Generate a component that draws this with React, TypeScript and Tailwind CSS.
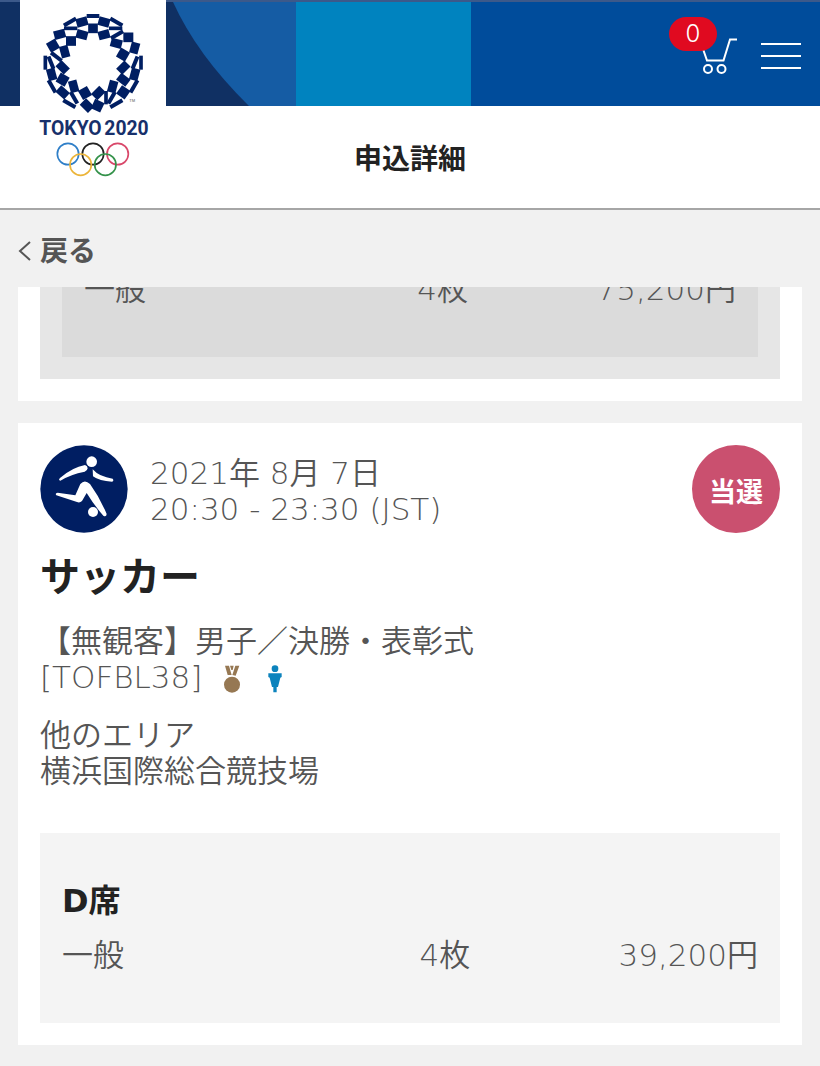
// [cx, cy, width, height, rotation]
const emblem: [number, number, number, number, number][] = [
  [189, 33, 38, 12, 0], [189, 70, 29, 29, 0], [156, 51, 34, 26, -15], [222, 51, 34, 26, 15],
  [120, 51, 42, 12, -30], [259, 51, 42, 12, 30], [122, 70, 40, 11, 0], [257, 70, 40, 11, 0],
  [156, 89, 34, 26, 15], [222, 89, 34, 26, -15], [89, 88, 34, 26, -15], [123, 108, 30, 29, 0],
  [69, 122, 31, 31, -30], [104, 140, 26, 36, -15], [261, 89, 42, 12, -30], [295, 97, 30, 29, 0],
  [259, 115, 34, 26, 15], [314, 129, 26, 34, 15], [279, 149, 31, 31, 30], [46, 173, 11, 42, 0],
  [63, 173, 12, 40, -22], [79, 155, 40, 12, 38], [98, 187, 35, 26, 45], [65, 208, 26, 36, -15],
  [98, 224, 31, 31, 30], [66, 244, 12, 42, -30], [98, 262, 35, 26, 42], [131, 244, 26, 36, -15],
  [132, 278, 12, 40, -30], [118, 296, 42, 12, 30], [165, 264, 31, 31, -30],
  [171, 302, 35, 27, 45], [205, 264, 35, 27, -45], [203, 302, 31, 31, 25], [228, 278, 11, 40, 0],
  [248, 245, 26, 36, 15], [245, 278, 12, 40, 30], [259, 296, 42, 12, -30], [280, 262, 31, 31, 35],
  [312, 244, 12, 42, 30], [280, 224, 35, 26, 38], [314, 208, 26, 36, 15], [280, 188, 35, 26, -45],
  [315, 173, 12, 40, 22], [333, 173, 11, 42, 0],
];

const rings = [
  { cx: 114, cy: 447, color: '#2f7fc8' },
  { cx: 189, cy: 447, color: '#222222' },
  { cx: 263, cy: 447, color: '#d9486a' },
  { cx: 152, cy: 479, color: '#ecb53a' },
  { cx: 226, cy: 479, color: '#34924a' },
];

function Logo() {
  return (
    <a href="#" aria-label="TOKYO 2020" className="absolute left-5 top-0 z-10 h-48 w-[146px] bg-white">
      <svg viewBox="-30 -15 438 576" className="h-48 w-[146px]">
        {emblem.map(([cx, cy, w, h, r], i) => (
          <rect key={i} x={cx - w / 2} y={cy - h / 2} width={w} height={h} transform={`rotate(${r} ${cx} ${cy})`} fill="#001e62" />
        ))}
        <text x="298" y="291" fontSize="12" fontFamily="Liberation Sans" fill="#555">TM</text>
        <g fontSize="58" fontWeight="700" fontFamily="Roboto" fill="#17306b">
          <text x="28" y="390">TOKYO</text>
          <text x="356" y="390" textAnchor="end">2020</text>
        </g>
        {rings.map((ring) => (
          <circle key={ring.color} cx={ring.cx} cy={ring.cy} r="32" fill="none" stroke={ring.color} strokeWidth="5" />
        ))}
      </svg>
    </a>
  );
}

function SoccerIcon() {
  return (
    <svg viewBox="0 0 264 264" className="size-[88px] shrink-0" aria-hidden="true">
      <circle cx="132" cy="132" r="131" fill="#001e62" />
      <g fill="#fff">
        <circle cx="155" cy="50" r="16" />
        <path d="M135 60Q143 62 143 70Q143 76 134 80Q92 88 61 107Q54 106 60 99Q97 67 135 60Z" />
        <path d="M158 73Q178 96 218 101Q223 107 216 110Q178 109 159 94Z" />
        <path d="M121 117Q134 102 150 117Q180 158 200 207Q199 217 190 212Q164 183 140 144L126 168Q119 175 111 171L49 151Q44 145 53 143L106 151Z" />
        <circle cx="159" cy="201" r="15" />
      </g>
    </svg>
  );
}

function MedalIcon() {
  return (
    <svg viewBox="0 0 48 84" className="h-7 w-4" fill="#967853" aria-label="メダル">
      <path d="M3 2H15L23 30H11ZM34 2H46L35 32L25 30ZM18 2H29L26 15H22Z" />
      <circle cx="24" cy="59" r="24" />
    </svg>
  );
}

function ManIcon() {
  return (
    <svg viewBox="0 0 42 84" className="h-7 w-[14px]" fill="#0c83bd" aria-label="男子">
      <circle cx="21" cy="11" r="10" />
      <path d="M1 25H41V36L37 38L30 66H26V82H16V66H12L5 38L1 36Z" />
    </svg>
  );
}

function CartIcon() {
  return (
    <svg viewBox="0 0 36 38" className="h-[38px] w-9" fill="none" stroke="#fff" strokeWidth="2" aria-hidden="true">
      <path d="M2 12L6 23.500H22.500L29 2.500H36" />
      <circle cx="7" cy="32" r="4" />
      <circle cx="20.500" cy="32" r="4" />
    </svg>
  );
}

function TicketRow({ count, price }: { count: string; price: string }) {
  return (
    <table className="w-full table-fixed leading-9">
      <tbody>
        <tr>
          <td className="w-[40%] text-left">一般</td>
          <td className="w-[30%] text-center">{count}</td>
          <td className="w-[30%] whitespace-nowrap text-right">{price}</td>
        </tr>
      </tbody>
    </table>
  );
}

export default function App() {
  return (
    <div className="min-h-screen bg-[#f1f1f1] font-['DejaVu_Sans_Light','Inter','Noto_Sans_CJK_JP',sans-serif] text-[31px] font-[350] leading-9 text-[#555]">
      <header className="relative border-b-2 border-[#a6a6a6] bg-white">
        <Logo />
        <div className="relative h-[106px] border-t-2 border-[#3c598a] bg-[#004c9b]">
          <div className="flex h-full w-[471px]">
            <svg viewBox="0 0 296 104" className="h-full w-[296px]" aria-hidden="true">
              <path d="M0 0H296V104H0Z" fill="#103063" />
              <path d="M173 0Q197 53 249 104H296V0Z" fill="#155ca4" />
            </svg>
            <div className="flex-1 bg-[#0083bf]" />
          </div>
          <button aria-label="カート" className="absolute right-[83px] top-[35px]">
            <CartIcon />
            <span className="absolute -left-8 -top-5 flex h-[34px] w-12 items-center justify-center rounded-full bg-[#e00a20] font-['Inter',sans-serif] text-2xl text-white">
              0
            </span>
          </button>
          <button aria-label="メニュー" className="absolute right-[19px] top-[41px] flex w-10 flex-col gap-[10px]">
            <span className="h-0.5 bg-white" />
            <span className="h-0.5 bg-white" />
            <span className="h-0.5 bg-white" />
          </button>
        </div>
        <h1 className="flex h-[102px] items-center justify-center font-['Noto_Sans_CJK_JP',sans-serif] text-[28px] font-bold text-[#222]">
          申込詳細
        </h1>
      </header>

      <nav className="flex h-[77px] items-center px-[18px]">
        <a href="#" className="flex items-center gap-2 font-['Noto_Sans_CJK_JP',sans-serif] text-[28px] font-bold">
          <svg viewBox="0 0 14 22" className="mt-1 h-[22px] w-[14px]" fill="none" stroke="#555" strokeWidth="2" aria-hidden="true">
            <path d="M12 2L2 11L12 20" />
          </svg>
          戻る
        </a>
      </nav>

      <main className="flex flex-col gap-[22px] px-[18px] pb-5">
        {/* scrolled card, only its lower part shows */}
        <section className="flex h-[114px] flex-col justify-end overflow-hidden bg-white px-[22px] pb-[22px]">
          <div className="bg-[#e6e6e6] px-[22px] pb-[22px]">
            <div className="bg-[#dbdbdb] px-[22px] pb-[50px]">
              <TicketRow count="4枚" price="75,200円" />
            </div>
          </div>
        </section>

        <section className="bg-white p-[22px]">
          <div className="flex items-center">
            <SoccerIcon />
            <p className="ml-[22px] pt-1">
              2021年 8月 7日
              <br />
              20:30 - 23:30 (JST)
            </p>
            <span className="ml-auto flex size-[88px] items-center justify-center rounded-full bg-[#ca506f] pt-1 font-['Noto_Sans_CJK_JP',sans-serif] text-[27px] font-bold text-white">
              当選
            </span>
          </div>
          <h2 className="mt-[22px] text-[40px] font-bold leading-[44px] text-[#222]">サッカー</h2>
          <div className="mt-6">
            <p>【無観客】男子／決勝・表彰式</p>
            <p className="flex items-center">
              [TOFBL38]
              <span className="ml-[22px] mt-1 flex gap-7">
                <MedalIcon />
                <ManIcon />
              </span>
            </p>
          </div>
          <p className="mt-[22px]">
            他のエリア
            <br />
            横浜国際総合競技場
          </p>
          <div className="mt-11 bg-[#f4f4f4] px-[22px] py-[50px]">
            <h3 className="font-['DejaVu_Sans','Noto_Sans_CJK_JP',sans-serif] text-[32px] font-bold text-[#222]">D席</h3>
            <div className="mt-[18px]">
              <TicketRow count="4枚" price="39,200円" />
            </div>
          </div>
        </section>
      </main>
    </div>
  );
}
